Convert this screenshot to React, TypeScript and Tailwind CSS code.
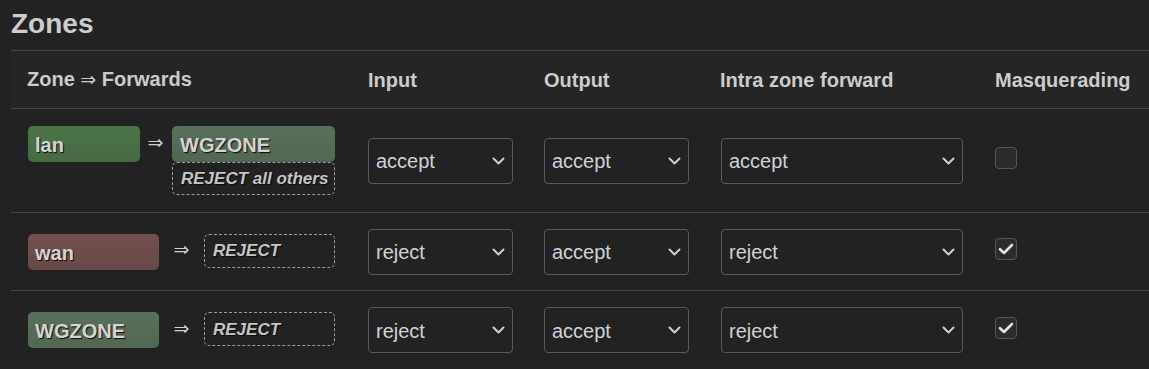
type Zone = { name: string; color: string; width: string };

const ROWS = [
  {
    zone: { name: "lan", color: "bg-[linear-gradient(#4c7448,#466a43)]", width: "w-[112px]" },
    dest: { name: "WGZONE", color: "bg-[linear-gradient(#58705a,#526752)]" },
    input: "accept", output: "accept", intra: "accept", masq: false, height: "h-[104px]",
  },
  {
    zone: { name: "wan", color: "bg-[linear-gradient(#735050,#684848)]", width: "w-[131px]" },
    dest: null,
    input: "reject", output: "accept", intra: "reject", masq: true, height: "h-[78px]",
  },
  {
    zone: { name: "WGZONE", color: "bg-[linear-gradient(#58705a,#526752)]", width: "w-[131px]" },
    dest: null,
    input: "reject", output: "accept", intra: "reject", masq: true, height: "h-[79px]",
  },
];

const COLS = "grid grid-cols-[341px_176px_176px_275px_1fr]";

function Badge({ zone }: { zone: Zone }) {
  return (
    <div className={`${zone.width} ${zone.color} h-[36px] rounded-[5px] px-[7px] pt-[2px] flex items-center text-[20px] font-bold text-[#d4d4d4] [text-shadow:1px_1px_1px_rgba(0,0,0,0.85)]`}>
      {zone.name}
    </div>
  );
}

function Arrow({ w }: { w: string }) {
  return (
    <span className={`${w} h-[34px] flex items-center justify-center text-[19px] text-[#cfcfcf] font-['Liberation_Sans','DejaVu_Sans',sans-serif]`}>
      ⇒
    </span>
  );
}

function Reject({ label, w, h }: { label: string; w: string; h: string }) {
  return (
    <div className={`${w} ${h} rounded-[5px] border border-dashed border-[#9a9a9a] px-[8px] pt-[1px] flex items-center whitespace-nowrap text-[17px] font-bold italic text-[#c4c4c4] [text-shadow:1px_1px_1px_rgba(0,0,0,0.7)]`}>
      {label}
    </div>
  );
}

function Select({ value, w }: { value: string; w: string }) {
  return (
    <div className={`${w} h-[46px] rounded-[4px] border border-[#595959] bg-[#222222] pl-[7px] pr-[7px] pt-[1px] flex items-center justify-between text-[20px] text-[#cdd3d8]`}>
      <span>{value}</span>
      <svg width="13" height="9" viewBox="0 0 13 9" fill="none">
        <path d="M1.5 1.5 L6.5 6.5 L11.5 1.5" stroke="#cfcfcf" strokeWidth="2" strokeLinecap="round" strokeLinejoin="round" />
      </svg>
    </div>
  );
}

function Checkbox({ checked }: { checked: boolean }) {
  return (
    <div className="w-[22px] h-[22px] mb-[5px] rounded-[4px] border border-[#555555] bg-[#2b2b2b] flex items-center justify-center">
      {checked && (
        <svg width="16" height="12" viewBox="0 0 16 12" fill="none">
          <path d="M2 6.2 L6 10 L14 2" stroke="#e2e2e2" strokeWidth="2.6" strokeLinecap="round" strokeLinejoin="round" />
        </svg>
      )}
    </div>
  );
}

export default function App() {
  return (
    <div className="w-[1149px] h-[369px] overflow-hidden bg-[#222222] pl-[11px] pt-[8px] text-[#cccccc] font-['Liberation_Sans',Arial,sans-serif]">
      <h2 className="text-[28px] leading-[32px] font-bold text-[#cccccc] mb-[10px]">Zones</h2>

      <div className="w-full">
        {/* Header */}
        <div className={`${COLS} h-[59px] border-y border-[#444444] bg-[#252525] items-center text-[20px] font-bold text-[#cccccc]`}>
          <div className="pl-[16px] whitespace-nowrap">Zone <span className="font-normal text-[19px] font-['Liberation_Sans','DejaVu_Sans',sans-serif]">⇒</span> Forwards</div>
          <div className="pl-[16px]">Input</div>
          <div className="pl-[16px]">Output</div>
          <div className="pl-[16px]">Intra zone forward</div>
          <div className="pl-[16px] whitespace-nowrap">Masquerading</div>
        </div>

        {ROWS.map((row, i) => (
          <div key={i} className={`${COLS} ${row.height} border-b border-[#444444] items-center`}>
            <div className="pl-[17px]">
              {row.dest ? (
                <div className="flex items-start">
                  <Badge zone={row.zone} />
                  <span className="ml-[8px] mr-[9px]"><Arrow w="w-[15px]" /></span>
                  <div className="flex flex-col">
                    <div className={`w-[163px] h-[36px] ${row.dest.color} rounded-[5px] px-[8px] pt-[2px] flex items-center text-[20px] font-bold text-[#d4d4d4] [text-shadow:1px_1px_1px_rgba(0,0,0,0.85)]`}>
                      {row.dest.name}
                    </div>
                    <Reject label="REJECT all others" w="w-[163px]" h="h-[33px]" />
                  </div>
                </div>
              ) : (
                <div className="flex items-start gap-[15px]">
                  <Badge zone={row.zone} />
                  <Arrow w="w-[15px]" />
                  <Reject label="REJECT" w="w-[131px]" h="h-[34px]" />
                </div>
              )}
            </div>
            <div className="pl-[16px]"><Select value={row.input} w="w-[145px]" /></div>
            <div className="pl-[16px]"><Select value={row.output} w="w-[145px]" /></div>
            <div className="pl-[17px]"><Select value={row.intra} w="w-[242px]" /></div>
            <div className="pl-[16px]"><Checkbox checked={row.masq} /></div>
          </div>
        ))}
      </div>
    </div>
  );
}
